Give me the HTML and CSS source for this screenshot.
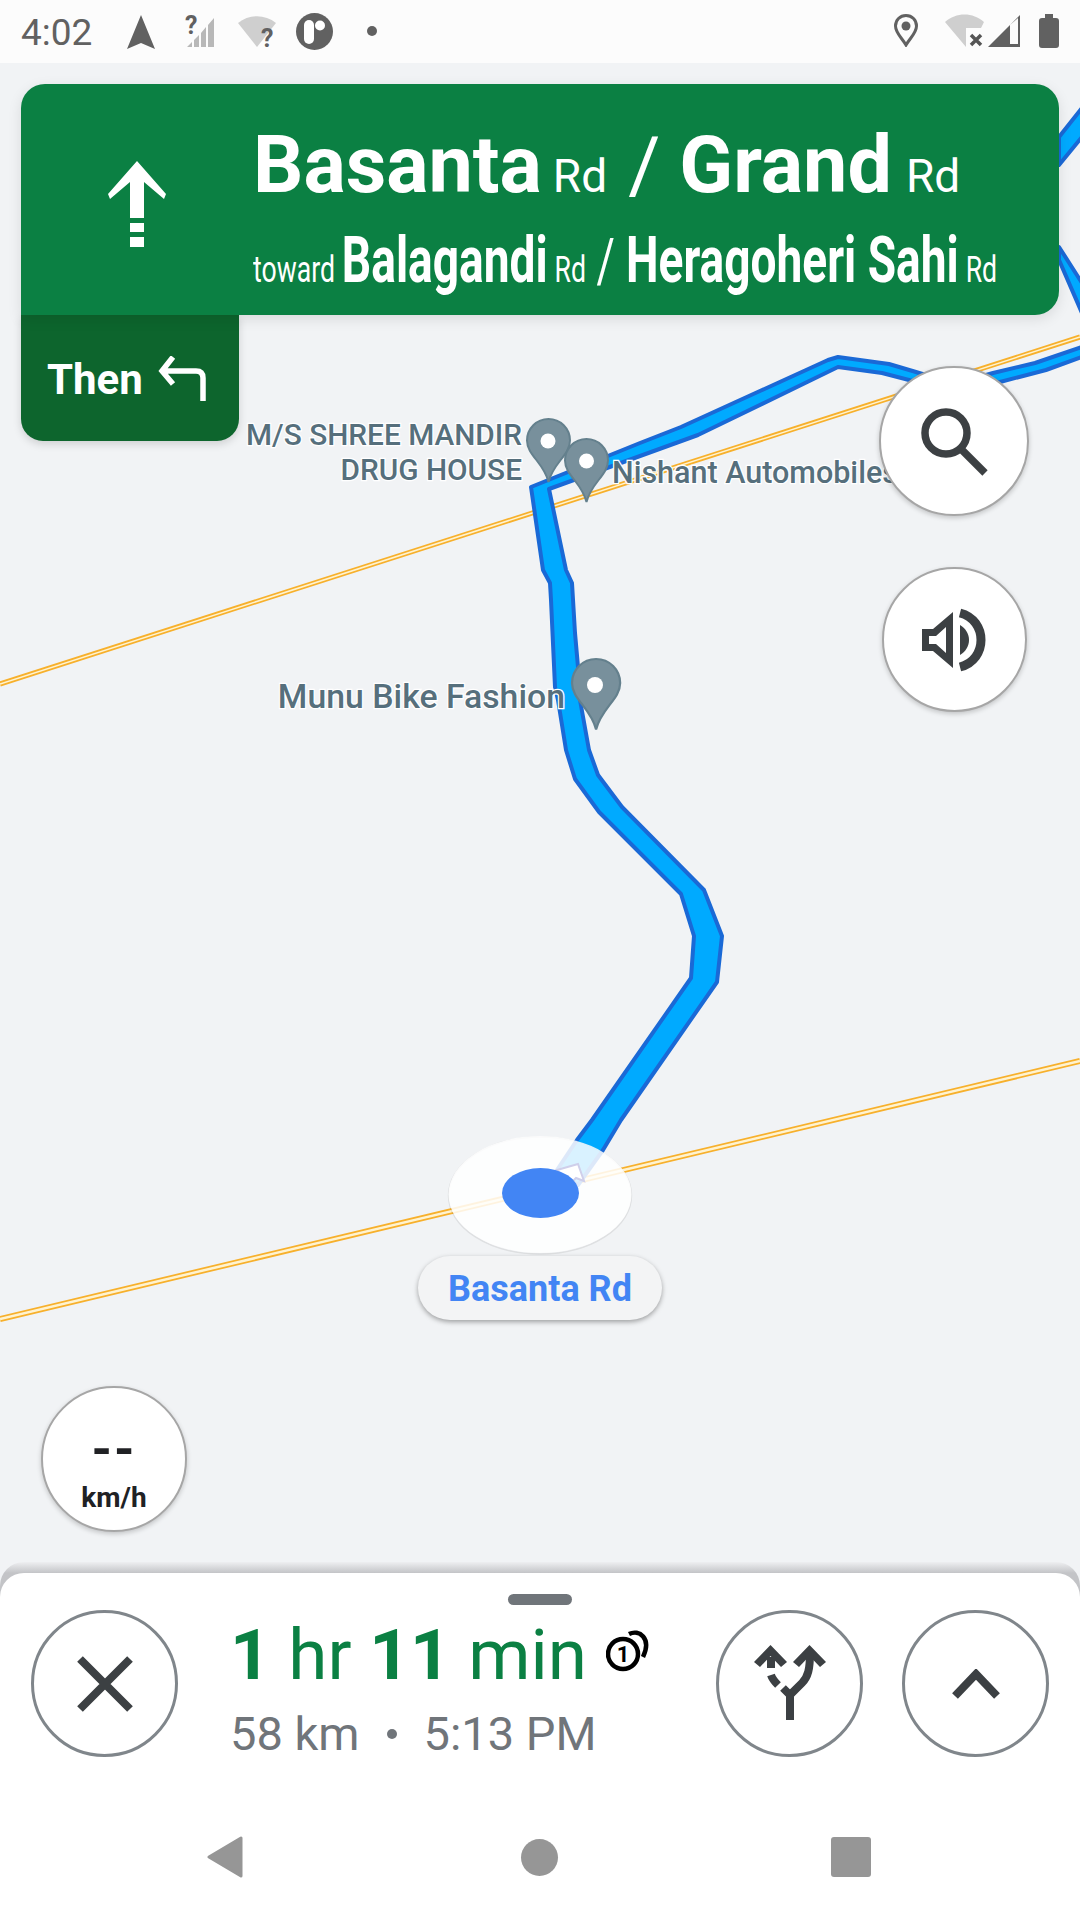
FILE: index.html
```html
<!DOCTYPE html>
<html lang="en">
<head>
    <meta charset="UTF-8">
    <meta name="viewport" content="width=device-width, initial-scale=1.0">
    <title>Navigation</title>
    <link rel="stylesheet" href="styles.css">
</head>
<body>
    <div class="status-bar">
        <span class="clock">4:02</span>
        <svg class="si nav-icon" width="28" height="34" viewBox="0 0 28 34"><path class="ic" d="M14 0L28 34L14 28L0 34Z"/></svg>
        <svg class="si signal-icon" width="29" height="45" viewBox="0 -8 29 45">
            <path class="bar" d="M2 31L7 26V31ZM9 24L14 19V31H9ZM16 17L21 11V31H16ZM23 9L29 2V31H23Z"/>
            <text class="q" x="0" y="18">?</text>
        </svg>
        <svg class="si wifi-icon" width="38" height="42" viewBox="0 -4 38 42">
            <path class="wedge" d="M0 7C11 -2 27 -2 38 7L19 31Z"/>
            <text class="q" x="23" y="31">?</text>
        </svg>
        <svg class="si logo-icon" width="37" height="37" viewBox="0 0 37 37">
            <circle class="ic" cx="18.5" cy="18.5" r="18.5"/>
            <rect class="wh" x="8" y="7" width="10" height="24" rx="5"/>
            <circle class="wh" cx="24" cy="12.500" r="5"/>
        </svg>
        <svg class="si dot-icon" width="10" height="10" viewBox="0 0 10 10"><circle class="ic" cx="5" cy="5" r="5"/></svg>

        <svg class="si pin-status" width="24" height="33" viewBox="0 0 24 33">
            <path class="ic-line" d="M12 1.500C6 1.500 1.500 6 1.500 12C1.500 19 8 24 12 31C16 24 22.500 19 22.500 12C22.500 6 18 1.500 12 1.500Z"/>
            <circle class="ic" cx="12" cy="12" r="4.500"/>
        </svg>
        <svg class="si wifi-x" width="39" height="33" viewBox="0 0 39 33">
            <path class="wedge" d="M0 8C11 -2 28 -2 39 8L36 14H21V33Z"/>
            <path class="x-line" d="M26 21L36 31M36 21L26 31"/>
        </svg>
        <svg class="si cell-icon" width="32" height="32" viewBox="0 0 32 32">
            <path class="ic" d="M0 32L32 0V32ZM22 10V29H30V3Z" fill-rule="evenodd"/>
        </svg>
        <svg class="si batt-icon" width="20" height="34" viewBox="0 0 20 34"><path class="ic" d="M6 0H14V4H17Q20 4 20 7V31Q20 34 17 34H3Q0 34 0 31V7Q0 4 3 4H6Z"/></svg>
    </div>

    <div class="map">
        <svg class="map-canvas" width="1080" height="1499" viewBox="0 63 1080 1499">
            <line class="road-out thin" x1="0" y1="684" x2="1080" y2="337"/>
            <line class="road-in thin" x1="0" y1="684" x2="1080" y2="337"/>
            <line class="road-out" x1="0" y1="1319" x2="1080" y2="1061"/>
            <line class="road-in" x1="0" y1="1319" x2="1080" y2="1061"/>

            <!-- route, gets narrower further away -->
            <polygon class="route" points="557,1170 577,1140 592,1120 691,978 694,936 681,894 599,812 575,779 566,750 558,700 555,687 551,600 550,583 543,570 531,487 640,443 681,427 828,360 838,357 889,364 916,372 955,384 993,373 1035,363 1082,347 1082,357 1046,370 1000,382 955,396 909,380 882,373 838,367 698,435 549,489 566,570 572,583 575,633 578,667 580,700 589,750 598,775 622,807 704,890 722,936 717,982 621,1120 603,1150 578,1185"/>
            <polygon class="route" points="1059,137 1082,108 1082,137 1059,165"/>
            <polygon class="route" points="1059,247 1082,283 1082,313 1059,260"/>

            <defs>
                <path id="pin" d="M21.500 0C9.600 0 0 9.600 0 21.500C0 36 17 44 21.500 63C26 44 43 36 43 21.500C43 9.600 33.400 0 21.500 0Z"/>
            </defs>

            <text class="poi" text-anchor="end" x="522" y="445">M/S SHREE MANDIR</text>
            <text class="poi" text-anchor="end" x="522" y="480">DRUG HOUSE</text>
            <text class="poi poi-mid" x="612" y="483">Nishant Automobiles</text>
            <text class="poi poi-big" text-anchor="end" x="565" y="708">Munu Bike Fashion</text>

            <use class="pin" href="#pin" x="527" y="419"/>
            <circle class="wh" cx="548" cy="441" r="7.500"/>
            <use class="pin" href="#pin" x="565" y="439"/>
            <circle class="wh" cx="586.500" cy="461" r="7.500"/>
            <use class="pin" href="#pin" transform="translate(572 659) scale(1.120)"/>
            <circle class="wh" cx="595" cy="685" r="8"/>

            <ellipse class="disc-edge" cx="540" cy="1195.500" rx="91.500" ry="58.500"/>
            <ellipse class="disc" cx="540" cy="1194.500" rx="91.500" ry="58.500"/>
            <path class="chevron-tile" d="M557 1170L578 1164L584 1181L576 1178L570 1184Z"/>
            <ellipse class="puck" cx="540.500" cy="1193" rx="38.500" ry="25"/>
        </svg>

        <div class="guidance">
            <div class="sign">
                <div class="sign-arrow">
                    <svg width="58" height="86" viewBox="0 0 58 86"><path class="wh" d="M29 0L58 33L56 38L36 21V57H22V21L2 38L0 33ZM22 62H36V71H22ZM22 76H36V86H22Z"/></svg>
                </div>
                <div class="sign-text">
                    <div class="line line-one">
                        <b>Basanta</b><span class="rd">Rd</span><span class="slash">/</span><b>Grand</b><span class="rd last-rd">Rd</span>
                    </div>
                    <div class="line line-two">
                        <span class="rd">toward</span><b>Balagandi</b><span class="rd">Rd</span><span class="slash">/</span><b>Heragoheri Sahi</b><span class="rd">Rd</span>
                    </div>
                </div>
            </div>
            <div class="then">
                <span>Then</span>
                <svg width="50" height="46" viewBox="0 0 50 46"><path class="then-arrow" d="M15 1L4 15L15 28M5 15H38Q45 15 45 22V45"/></svg>
            </div>
        </div>

        <div class="round-btn search-btn">
            <svg width="76" height="76" viewBox="0 0 76 76">
                <circle class="dark-line" cx="30" cy="30" r="21"/>
                <path class="dark-line" d="M45 46L69 70"/>
            </svg>
        </div>
        <div class="round-btn sound-btn">
            <svg width="66" height="64" viewBox="0 0 66 64">
                <path class="dark-fill" fill-rule="evenodd" d="M0 21H11L31 4V60L11 43H0ZM7 28V36H14L24 45V19L14 28Z"/>
                <path class="dark-fill" d="M38 17C50 24 50 40 38 47Z"/>
                <path class="sound-arc" d="M38 5C66 12 66 52 38 59"/>
            </svg>
        </div>
        <div class="round-btn speed">
            <span class="speed-val">--</span>
            <span class="speed-unit">km/h</span>
        </div>

        <div class="road-label">Basanta Rd</div>
    </div>

    <div class="sheet-edge">
        <div class="sheet">
            <div class="handle"></div>
            <div class="trip-row">
                <div class="outline-btn">
                    <svg width="60" height="60" viewBox="0 0 60 60"><path class="dark-line thinner" d="M5 5L55 55M55 5L5 55"/></svg>
                </div>
                <div class="trip-info">
                    <div class="eta">
                        <span><b>1</b> hr <b>11</b> min</span>
                        <svg class="traffic" width="45" height="44" viewBox="0 0 45 44">
                            <circle class="tr-line" cx="17" cy="25" r="15"/>
                            <text class="tr-num" x="17" y="33" text-anchor="middle">1</text>
                            <path class="tr-line" d="M23 5C33 0 46 9 37 28"/>
                        </svg>
                    </div>
                    <div class="trip-sub">
                        <span>58 km</span>
                        <i class="sep"></i>
                        <span>5:13 PM</span>
                    </div>
                </div>
                <div class="outline-btn alt-btn">
                    <svg width="76" height="78" viewBox="0 0 76 78">
                        <path class="dark-fill" d="M18.500 0L35 17L29 22L18.500 11L8 22L2 17ZM57.500 0L74 17L68 22L57.500 11L47 22L41 17Z"/>
                        <path class="fork" d="M38 75V50L50 38C56 32 58 24 58 8"/>
                        <path class="fork" d="M38 50L31 43M26 40C22 36 20 33 19 30M19 23V12"/>
                    </svg>
                </div>
                <div class="outline-btn up-btn">
                    <svg width="48" height="30" viewBox="0 0 48 30"><path class="dark-line thinner" d="M3 27L24 5L45 27"/></svg>
                </div>
            </div>
        </div>
    </div>

    <div class="nav-bar">
        <svg width="36" height="42" viewBox="0 0 36 42"><path class="nav-key" d="M34 2V40L2 21Z"/></svg>
        <div class="home-key"></div>
        <div class="recent-key"></div>
    </div>
</body>
</html>
```
FILE: styles.css
```css
/* Basic styling */
body {
    margin: 0;
    width: 1080px;
    height: 1920px;
    overflow: hidden;
    display: flex;
    flex-direction: column;
    background-color: #f1f3f5;
    font-family: Roboto, "Liberation Sans", sans-serif;
}

/* status bar */
.status-bar {
    height: 63px;
    flex: none;
    display: flex;
    align-items: flex-start;
    background-color: #fcfcfc;
    color: #616161;
}

.clock {
    margin: 12px 0 0 21px;
    font-size: 37px;
    line-height: 42px;
    width: 72px;
}

.si { flex: none; }
.nav-icon { margin: 15px 0 0 34px; }
.signal-icon { margin: 8px 0 0 30px; }
.wifi-icon { margin: 12px 0 0 24px; }
.logo-icon { margin: 13px 0 0 20px; }
.dot-icon { margin: 26px 0 0 34px; }
.pin-status { margin: 14px 0 0 auto; }
.wifi-x { margin: 14px 0 0 27px; }
.cell-icon { margin: 15px 0 0 4px; }
.batt-icon { margin: 14px 21px 0 19px; }

.ic { fill: #616161; }
.ic-line { fill: none; stroke: #616161; stroke-width: 3; }
.bar { fill: #b8b8b8; }
.wedge { fill: #cfcfcf; }
.wh { fill: #fff; }
.x-line { stroke: #555; stroke-width: 3.500; }
.q { font-size: 25px; font-weight: 700; fill: #616161; }

/* map */
.map {
    position: relative;
    flex: none;
    height: 1499px;
    overflow: hidden;
}

.map-canvas {
    position: absolute;
    top: 0;
    left: 0;
}

.road-out { stroke: #f7b02c; stroke-width: 6; }
.road-in { stroke: #fff3d0; stroke-width: 2.500; }
.road-out.thin { stroke-width: 5; }
.road-in.thin { stroke-width: 1.500; }

.route {
    fill: #00aaff;
    stroke: #1a69d6;
    stroke-width: 4;
    stroke-linejoin: round;
}

.poi {
    font-size: 29.800px;
    font-weight: 500;
    fill: #566f7c;
    stroke: #fff;
    stroke-width: 2.500px;
    paint-order: stroke;
}

.poi-mid { font-size: 30.500px; }
.poi-big { font-size: 33.800px; }

.pin {
    fill: #78909c;
    stroke: #64808d;
    stroke-width: 2;
}

.disc { fill: rgba(255, 255, 255, 0.85); }

.disc-edge {
    fill: none;
    stroke: rgba(0, 0, 0, 0.08);
    stroke-width: 1.500;
}

.chevron-tile {
    fill: #fff;
    stroke: #cfcfea;
    stroke-width: 2;
}

.puck { fill: #4285f4; }

/* turn card */
.guidance {
    position: absolute;
    top: 21px;
    left: 21px;
    width: 1038px;
}

.sign {
    height: 231px;
    display: flex;
    background-color: #0b8043;
    border-radius: 24px;
    border-bottom-left-radius: 0;
    color: #fff;
    box-shadow: 0 4px 14px rgba(0, 0, 0, 0.1);
    position: relative;
}

.sign-arrow {
    width: 232px;
    flex: none;
    display: flex;
    justify-content: center;
    padding-top: 77px;
    box-sizing: border-box;
}

.sign-text {
    flex: 1;
    min-width: 0;
}

.line {
    display: flex;
    align-items: baseline;
    white-space: nowrap;
    transform-origin: 0 0;
}

.line-one {
    height: 103px;
    margin-top: 36px;
    font-size: 79px;
    line-height: 91px;
    column-gap: 11px;
}

.line-one .rd { font-size: 46px; }
.line-one .last-rd { margin-left: 3px; }
.line-one .slash { font-size: 78px; margin: 0 8px 0 10px; }

.line-two {
    font-size: 64px;
    line-height: 75px;
    column-gap: 9.500px;
    transform: scaleX(0.72);
}

.line-two .rd { font-size: 37px; }
.line-two .slash { font-size: 62px; margin: 0 6px 0 5px; }

.line b { font-weight: 700; }

.then {
    width: 218px;
    height: 126px;
    box-sizing: border-box;
    padding: 2px 0 0 26px;
    display: flex;
    align-items: center;
    column-gap: 15px;
    background-color: #0d652d;
    border-radius: 0 0 22px 22px;
    color: #fff;
    font-size: 42px;
    font-weight: 700;
    box-shadow: 0 3px 8px rgba(0, 0, 0, 0.15);
}

.then-arrow {
    fill: none;
    stroke: #fff;
    stroke-width: 5.500;
}

/* floating map buttons */
.round-btn {
    position: absolute;
    box-sizing: border-box;
    display: flex;
    align-items: center;
    justify-content: center;
    background-color: #fff;
    border: 2px solid #a6a6a6;
    border-radius: 50%;
    box-shadow: 0 2px 5px rgba(0, 0, 0, 0.2);
}

.search-btn {
    left: 879px;
    top: 303px;
    width: 150px;
    height: 150px;
}

.sound-btn {
    left: 882px;
    top: 504px;
    width: 145px;
    height: 145px;
}

.speed {
    left: 41px;
    top: 1323px;
    width: 146px;
    height: 146px;
    flex-direction: column;
    color: #202124;
    font-weight: 700;
}

.speed-val {
    font-size: 52px;
    line-height: 46px;
    letter-spacing: 2px;
    margin-top: 22px;
}

.speed-unit {
    font-size: 28px;
    line-height: 30px;
    margin-top: 10px;
}

.dark-line {
    fill: none;
    stroke: #3c4043;
    stroke-width: 7.500;
}

.dark-line.thinner { stroke-width: 8; }
.dark-fill { fill: #3c4043; }

.sound-arc {
    fill: none;
    stroke: #3c4043;
    stroke-width: 9;
}

.road-label {
    position: absolute;
    left: 418px;
    top: 1193px;
    width: 244px;
    height: 64px;
    padding-top: 2px;
    box-sizing: border-box;
    display: flex;
    align-items: center;
    justify-content: center;
    background-color: #f3f4f5;
    border-radius: 32px;
    box-shadow: 0 2px 5px rgba(0, 0, 0, 0.35);
    color: #4285f4;
    font-size: 36px;
    font-weight: 700;
}

/* bottom sheet */
.sheet-edge {
    flex: none;
    height: 247px;
    padding-top: 11px;
    box-sizing: border-box;
    border-radius: 24px 24px 0 0;
    background: linear-gradient(#eeeff1, #c3c4c7 11px);
}

.sheet {
    height: 100%;
    background-color: #fff;
    border-radius: 24px 24px 0 0;
    position: relative;
}

.handle {
    position: absolute;
    left: 508px;
    top: 21px;
    width: 64px;
    height: 11px;
    border-radius: 6px;
    background-color: #70757a;
}

.trip-row {
    display: flex;
    padding: 37px 0 0 31px;
}

.outline-btn {
    width: 147px;
    height: 147px;
    flex: none;
    box-sizing: border-box;
    display: flex;
    align-items: center;
    justify-content: center;
    border: 3px solid #80868b;
    border-radius: 50%;
}

.up-btn { margin-left: 39px; }

.trip-info {
    width: 538px;
    box-sizing: border-box;
    padding: 3px 0 0 52px;
}

.eta {
    display: flex;
    align-items: flex-start;
    column-gap: 19px;
    color: #0b8043;
    font-size: 71px;
    line-height: 84px;
    white-space: nowrap;
}

.eta b { font-weight: 700; }

.traffic { margin-top: 16px; flex: none; }

.tr-line {
    fill: none;
    stroke: #000;
    stroke-width: 4.500;
}

.tr-num {
    font-size: 22px;
    font-weight: 700;
    fill: #000;
}

.fork {
    fill: none;
    stroke: #3c4043;
    stroke-width: 8;
}

.trip-sub {
    display: flex;
    align-items: center;
    column-gap: 27px;
    margin-top: 10px;
    color: #70757a;
    font-size: 47px;
    line-height: 54px;
}

.sep {
    width: 10px;
    height: 10px;
    border-radius: 50%;
    background-color: #70757a;
}

/* android keys */
.nav-bar {
    flex: none;
    height: 111px;
    background-color: #fff;
    display: flex;
    align-items: center;
    justify-content: space-between;
    box-sizing: border-box;
    padding: 0 209px 15px 207px;
}

.nav-key {
    fill: #969696;
    stroke: #969696;
    stroke-width: 3;
    stroke-linejoin: round;
}

.home-key {
    width: 37px;
    height: 37px;
    margin-left: 5px;
    border-radius: 50%;
    background-color: #969696;
}

.recent-key {
    width: 40px;
    height: 40px;
    border-radius: 3px;
    background-color: #969696;
}
```
